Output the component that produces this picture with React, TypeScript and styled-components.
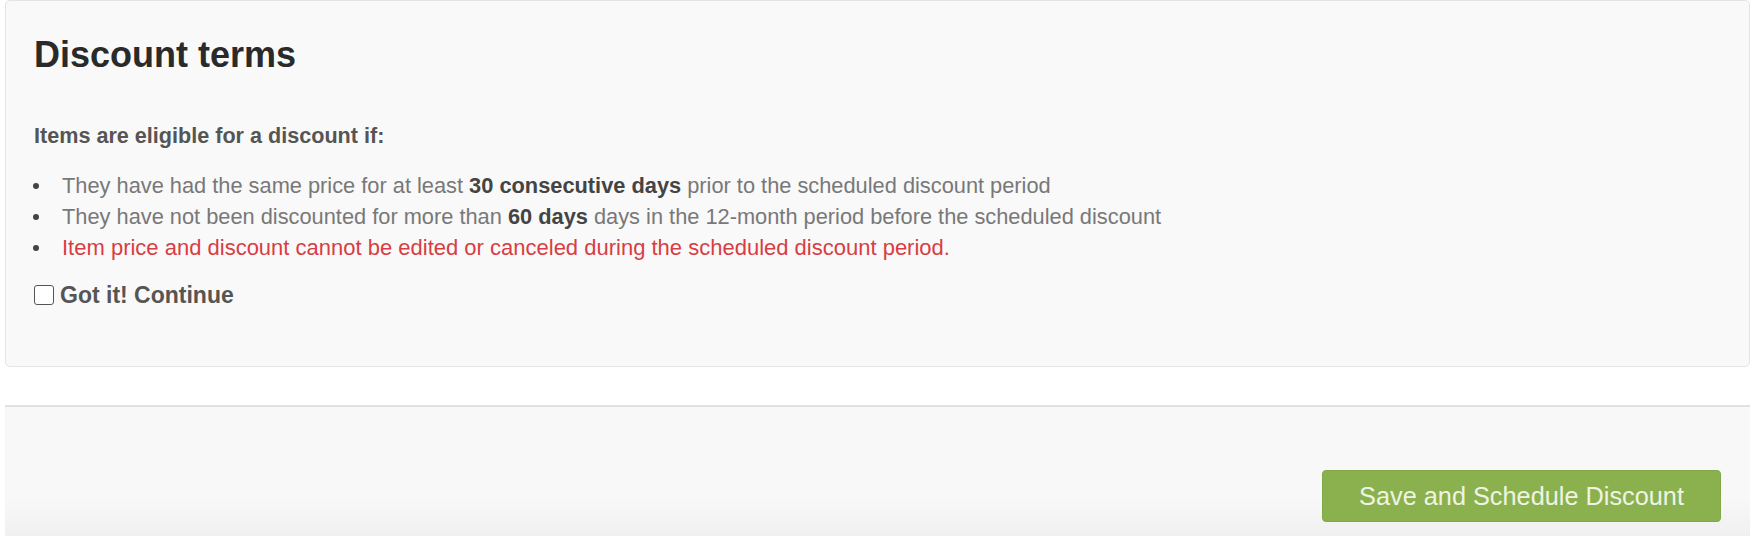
import React, { useState } from 'react'
import styled, { createGlobalStyle } from 'styled-components'

const GlobalStyle = createGlobalStyle`
  html, body {
    margin: 0;
    padding: 0;
    background: #fff;
    font-family: "Liberation Sans", Arial, Helvetica, sans-serif;
  }
`

const Page = styled.div`
  width: 1758px;
  height: 536px;
  overflow: hidden;
  display: flex;
  flex-direction: column;
`

const Panel = styled.section`
  margin: 0 8px 0 5px;
  height: 367px;
  box-sizing: border-box;
  padding: 34px 28px 0;
  background: #f9f9f9;
  border: 1px solid #e2e4e6;
  border-radius: 5px;
`

const Title = styled.h2`
  margin: 0 0 49px;
  font-size: 36px;
  line-height: 40px;
  font-weight: 700;
  color: #2a2a2a;
`

const Lead = styled.p`
  margin: 0 0 22px;
  font-size: 21.6px;
  line-height: 24px;
  font-weight: 700;
  color: #555;
`

const Terms = styled.ul`
  margin: 0 0 20px;
  padding: 0;
  list-style: none;
`

const Term = styled.li<{ $warn?: boolean }>`
  position: relative;
  padding-left: 28px;
  font-size: ${(p) => (p.$warn ? '22px' : '21.8px')};
  line-height: 31px;
  color: ${(p) => (p.$warn ? '#d83d44' : '#787878')};

  &::before {
    content: '';
    position: absolute;
    left: -1px;
    top: 13px;
    width: 6px;
    height: 6px;
    border-radius: 50%;
    background: #444;
  }

  b {
    color: #444;
    font-weight: 700;
  }
`

const CheckRow = styled.label`
  display: flex;
  align-items: center;
  gap: 6px;
  height: 24px;
  font-size: 23px;
  font-weight: 700;
  color: #555;
  cursor: pointer;
`

const Check = styled.input`
  appearance: none;
  margin: 0;
  width: 20px;
  height: 20px;
  border: 1.5px solid #555;
  border-radius: 3px;
  background: #fff;
  box-sizing: border-box;

  &:checked {
    background: #555;
  }
`

const Footer = styled.footer`
  flex: 1;
  margin: 38px 8px 0 5px;
  border-top: 2px solid #e1e1e1;
  background: linear-gradient(#f8f8f8, #f8f8f8 70%, #f0f0f0);
  display: flex;
  justify-content: flex-end;
  align-items: flex-start;
  padding: 63px 29px 0 0;
`

const PrimaryButton = styled.button`
  width: 399px;
  height: 52px;
  border: 1px solid #82a845;
  border-radius: 4px;
  background: #8bb14e;
  color: #eef4e4;
  font-family: "Liberation Sans", Arial, Helvetica, sans-serif;
  font-size: 25.3px;
  cursor: pointer;
`

export default function App() {
  const [agreed, setAgreed] = useState(false)

  return (
    <Page>
      <GlobalStyle />
      <Panel>
        <Title>Discount terms</Title>
        <Lead>Items are eligible for a discount if:</Lead>
        <Terms>
          <Term>
            They have had the same price for at least <b>30 consecutive days</b> prior to the scheduled discount period
          </Term>
          <Term>
            They have not been discounted for more than <b>60 days</b> days in the 12-month period before the scheduled
            discount
          </Term>
          <Term $warn>Item price and discount cannot be edited or canceled during the scheduled discount period.</Term>
        </Terms>
        <CheckRow>
          <Check type="checkbox" checked={agreed} onChange={(e) => setAgreed(e.target.checked)} />
          Got it! Continue
        </CheckRow>
      </Panel>
      <Footer>
        <PrimaryButton>Save and Schedule Discount</PrimaryButton>
      </Footer>
    </Page>
  )
}
